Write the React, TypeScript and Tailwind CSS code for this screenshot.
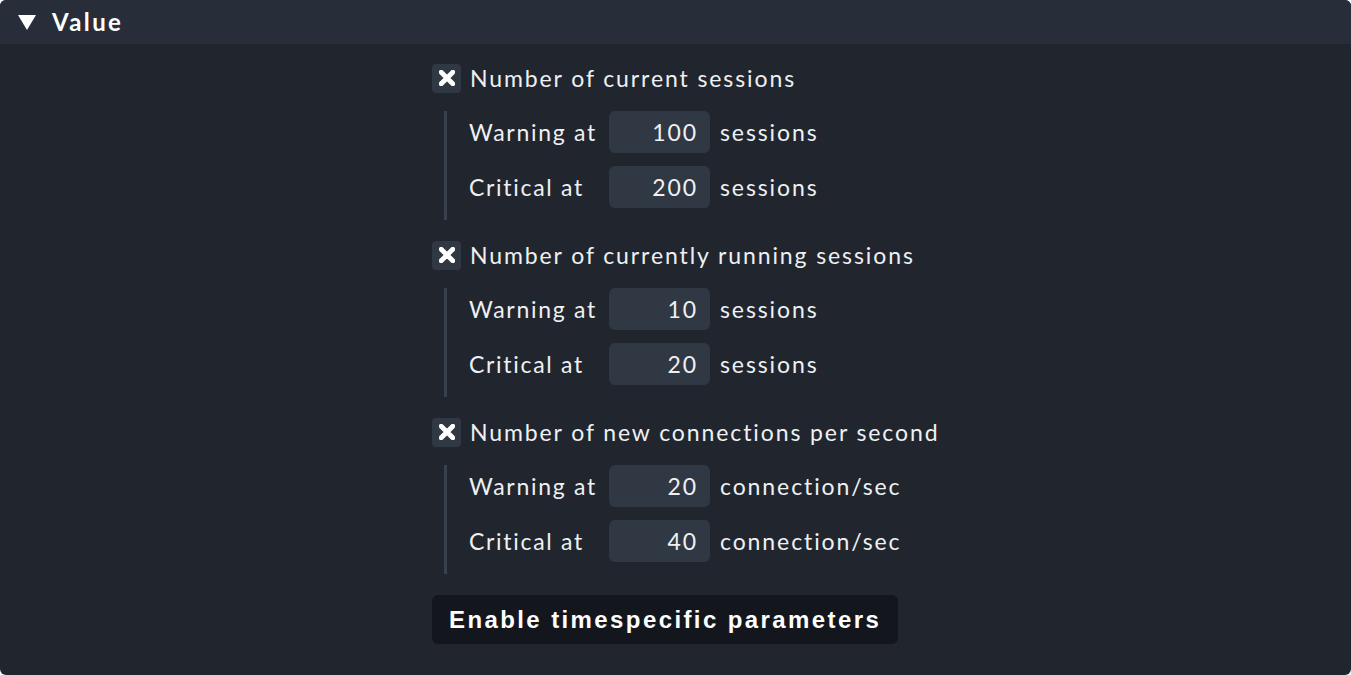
import React from "react";

const lato = { fontFamily: "Lato, 'Noto Sans', sans-serif" };

type Level = { label: string; value: string; unit: string };
type Section = { title: string; levels: Level[] };

const sections: Section[] = [
  {
    title: "Number of current sessions",
    levels: [
      { label: "Warning at", value: "100", unit: "sessions" },
      { label: "Critical at", value: "200", unit: "sessions" },
    ],
  },
  {
    title: "Number of currently running sessions",
    levels: [
      { label: "Warning at", value: "10", unit: "sessions" },
      { label: "Critical at", value: "20", unit: "sessions" },
    ],
  },
  {
    title: "Number of new connections per second",
    levels: [
      { label: "Warning at", value: "20", unit: "connection/sec" },
      { label: "Critical at", value: "40", unit: "connection/sec" },
    ],
  },
];

function Checkbox() {
  return (
    <div className="flex h-[29px] w-[29px] items-center justify-center rounded-[4px] bg-[#303844]">
      <svg width="16" height="16" viewBox="0 0 16 16">
        <path d="M2.2 2.2 L13.8 13.8 M13.8 2.2 L2.2 13.8" stroke="#ffffff" strokeWidth="4.8" strokeLinecap="round" />
      </svg>
    </div>
  );
}

function LevelRow({ level }: { level: Level }) {
  return (
    <div className="flex h-[42px] items-center">
      <span className="w-[140px] shrink-0 tracking-[1.7px]">{level.label}</span>
      <div className="flex h-[42px] w-[101px] items-center justify-end rounded-[6px] bg-[#303844] pr-[12px]">
        {level.value}
      </div>
      <span className="ml-[10px]">{level.unit}</span>
    </div>
  );
}

export default function App() {
  return (
    <div
      className="h-[675px] w-[1351px] overflow-hidden rounded-[6px] bg-[#21262e] text-[23px] tracking-[1.9px] text-[#eef0f3]"
      style={lato}
    >
      {/* Header */}
      <div className="flex h-[44px] items-center bg-[#282e39] pl-[18px]">
        <svg width="18" height="15" viewBox="0 0 18 15" className="mt-[1px]">
          <path d="M0 0 L18 0 L9 15 Z" fill="#ffffff" />
        </svg>
        <span className="ml-[16px] text-[24px] font-bold tracking-[2.4px] text-white">Value</span>
      </div>

      {/* Body */}
      <div className="flex flex-col items-start pl-[432px] pt-[20px]">
        {sections.map((s, i) => (
          <div key={i} className="mb-[21px] flex flex-col">
            <div className="flex h-[28px] items-center">
              <Checkbox />
              <span className="ml-[9px]">{s.title}</span>
            </div>
            <div className="ml-[12px] mt-[19px] flex flex-col gap-[13px] border-l-[3px] border-[#3a414e] pb-[12px] pl-[22px]">
              {s.levels.map((l, j) => (
                <LevelRow key={j} level={l} />
              ))}
            </div>
          </div>
        ))}
        <button
          className="flex h-[49px] items-center rounded-[6px] bg-[#13171d] px-[17px] text-[24px] font-bold tracking-[2.4px] text-white"
          style={{ fontFamily: "'Liberation Sans', Arial, sans-serif" }}
        >
          Enable timespecific parameters
        </button>
      </div>
    </div>
  );
}
